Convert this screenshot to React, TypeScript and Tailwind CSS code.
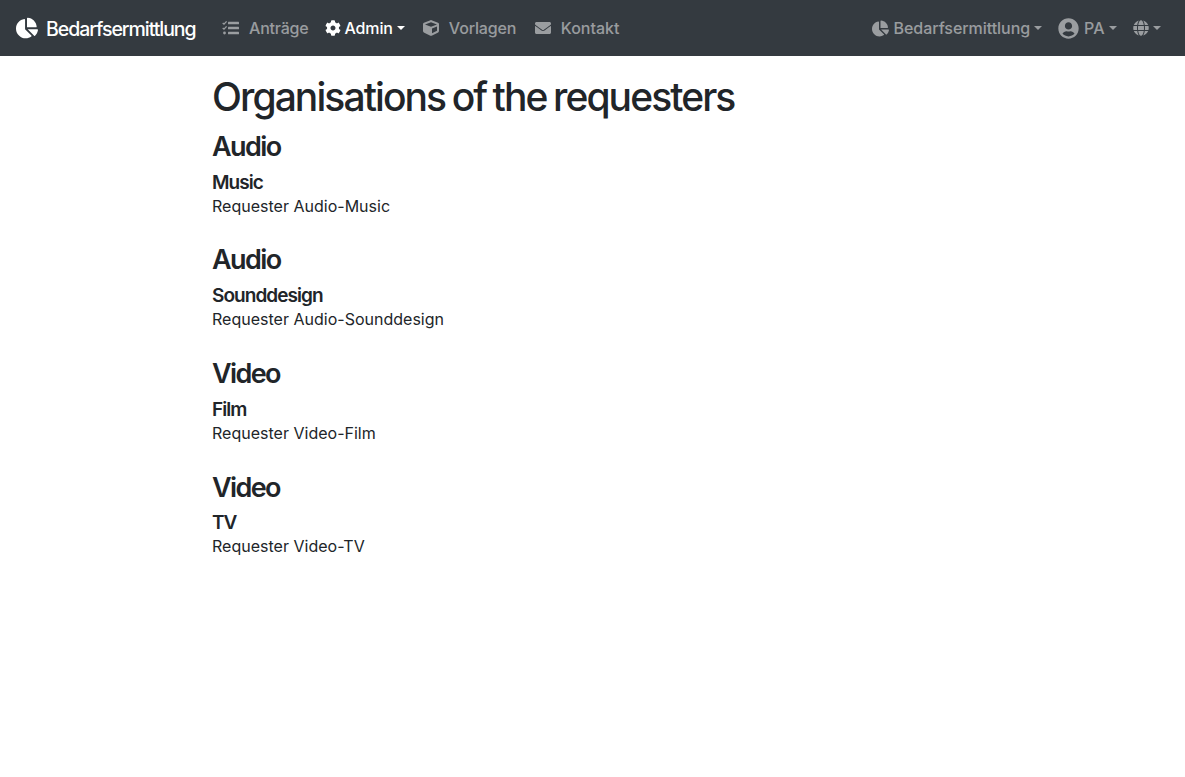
import { FaChartPie, FaCog, FaCube, FaEnvelope, FaUserCircle, FaGlobe } from 'react-icons/fa';

const groups = [
  { department: 'Audio', organization: 'Music', requester: 'Requester Audio-Music' },
  { department: 'Audio', organization: 'Sounddesign', requester: 'Requester Audio-Sounddesign' },
  { department: 'Video', organization: 'Film', requester: 'Requester Video-Film' },
  { department: 'Video', organization: 'TV', requester: 'Requester Video-TV' },
];

function Caret() {
  return <span className="inline-block border-x-[4px] border-t-[4px] border-x-transparent border-t-current" />;
}

function TasksIcon() {
  return (
    <svg viewBox="0 0 17 16" className="h-4 w-[17px]" fill="currentColor">
      <rect x="6" y="1.8" width="11" height="2.5" rx="0.5" />
      <rect x="6" y="6.8" width="11" height="2.5" rx="0.5" />
      <rect x="6" y="11.8" width="11" height="2.5" rx="0.5" />
      <circle cx="2.5" cy="13" r="1.4" />
      <path d="M0.7 3l1.3 1.2L4.6 1.4M0.7 8l1.3 1.2L4.6 6.4" fill="none" stroke="currentColor" strokeWidth="1.3" />
    </svg>
  );
}

export default function App() {
  return (
    <div className="min-h-[777px] bg-white font-['Inter',sans-serif] text-base text-[#212529]">
      <nav className="flex h-14 items-center bg-[#343a40] pr-6 pl-4 font-medium tracking-[-0.14px] text-white/50">
        <a className="flex w-[180px] items-center gap-2 text-[19.5px] tracking-[-1.05px] whitespace-nowrap text-white">
          <FaChartPie className="size-[22px] shrink-0" />
          <span className="pt-[3px]">Bedarfsermittlung</span>
        </a>
        <a className="ml-[26px] flex items-center gap-[10px] tracking-[-0.2px]"><TasksIcon />Anträge</a>
        <a className="ml-4 flex items-center gap-1 text-white"><FaCog className="size-4" />Admin<Caret /></a>
        <a className="ml-[18px] flex items-center gap-[10px]"><FaCube className="size-4" />Vorlagen</a>
        <a className="ml-[18.5px] flex items-center gap-[10px] tracking-normal"><FaEnvelope className="size-4" />Kontakt</a>
        <a className="ml-auto flex items-center gap-1 tracking-[-0.05px]"><FaChartPie className="mr-px size-[17px]" />Bedarfsermittlung<Caret /></a>
        <a className="ml-4 flex items-center gap-1 tracking-normal"><FaUserCircle className="mr-px size-[21px]" />PA<Caret /></a>
        <a className="ml-[16.5px] flex items-center gap-1"><FaGlobe className="size-4" /><Caret /></a>
      </nav>
      <main className="ml-[212px] pt-[17px]">
        <h1 className="mb-2 text-[39px] leading-[48px] font-medium tracking-[-1.92px] [word-spacing:-2px]">Organisations of the requesters</h1>
        {groups.map((g) => (
          <section key={g.requester} className="mb-[25px]">
            <h3 className="mb-[6.2px] pt-[0.8px] text-[27px] leading-[33.6px] font-semibold tracking-[-1.6px]">{g.department}</h3>
            <h5 className="pt-px text-[19px] leading-6 font-semibold tracking-[-0.95px]">{g.organization}</h5>
            <p className="-mt-px leading-6 tracking-[0.01px]">{g.requester}</p>
          </section>
        ))}
      </main>
    </div>
  );
}
